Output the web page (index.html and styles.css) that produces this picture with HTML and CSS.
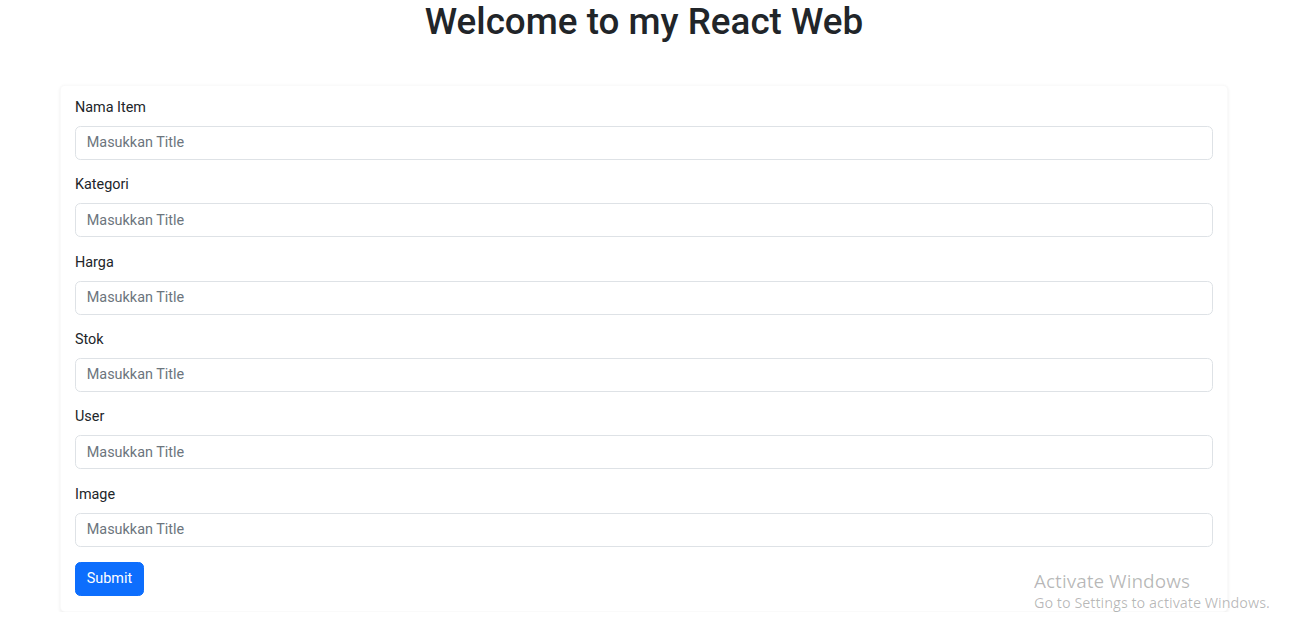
FILE: index.html
```html
<!DOCTYPE html>
<html lang="id">
<head>
<meta charset="utf-8">
<title>React Web</title>
<link rel="stylesheet" href="styles.css">
</head>
<body>
<div class="page">
  <h1 class="title">Welcome to my React Web</h1>
  <div class="card">
    <form class="form">
      <div class="field">
        <label class="label">Nama Item</label>
        <input class="input" type="text" placeholder="Masukkan Title">
      </div>
      <div class="field">
        <label class="label">Kategori</label>
        <input class="input" type="text" placeholder="Masukkan Title">
      </div>
      <div class="field">
        <label class="label">Harga</label>
        <input class="input" type="text" placeholder="Masukkan Title">
      </div>
      <div class="field">
        <label class="label">Stok</label>
        <input class="input" type="text" placeholder="Masukkan Title">
      </div>
      <div class="field">
        <label class="label">User</label>
        <input class="input" type="text" placeholder="Masukkan Title">
      </div>
      <div class="field">
        <label class="label">Image</label>
        <input class="input" type="text" placeholder="Masukkan Title">
      </div>
      <button class="btn" type="button">Submit</button>
    </form>
  </div>
</div>
<div class="watermark">
  <div class="wm-title">Activate Windows</div>
  <div class="wm-sub">Go to Settings to activate Windows.</div>
</div>
</body>
</html>
```

FILE: styles.css
```css
* { box-sizing: border-box; }
html, body { margin: 0; padding: 0; background: #fff; }
body {
  font-family: Roboto, "Open Sans", sans-serif;
  font-size: 14.4px;
  line-height: 1.5;
  color: #212529;
}
.page {
  width: 1168px;
  margin-left: 60px;
}
.title {
  margin: 0 0 41px;
  text-align: center;
  font-size: 36.8px;
  font-weight: 500;
  line-height: 44px;
}
.card {
  background: #fff;
  border-radius: 5px;
  box-shadow: 0 1.8px 3.6px rgba(0, 0, 0, 0.075);
  border: 1px solid rgba(0, 0, 0, 0.02);
  padding: 11px 14px 15px;
}
.form { display: flex; flex-direction: column; }
.field {
  display: flex;
  flex-direction: column;
  margin-bottom: 14.4px;
}
.field:last-of-type { margin-bottom: 15px; }
.label {
  margin-bottom: 7.2px;
  line-height: 21.6px;
}
.input {
  height: 34.2px;
  padding: 5.4px 10.8px;
  font: inherit;
  color: #212529;
  border: 1px solid #dee2e6;
  border-radius: 5.4px;
  background: #fff;
  outline: none;
}
.input::placeholder { color: #6c757d; opacity: 1; }
.btn {
  align-self: flex-start;
  height: 34.2px;
  padding: 5.4px 10.8px;
  font: inherit;
  color: #fff;
  background: #0d6efd;
  border: 1px solid #0d6efd;
  border-radius: 5.4px;
}
.watermark {
  position: absolute;
  left: 1034px;
  top: 569px;
  font-family: "Open Sans", "Noto Sans", sans-serif;
  color: rgba(0, 0, 0, 0.28);
}
.wm-title { font-size: 19px; line-height: 24px; }
.wm-sub { font-size: 14.4px; line-height: 20px; }
```
